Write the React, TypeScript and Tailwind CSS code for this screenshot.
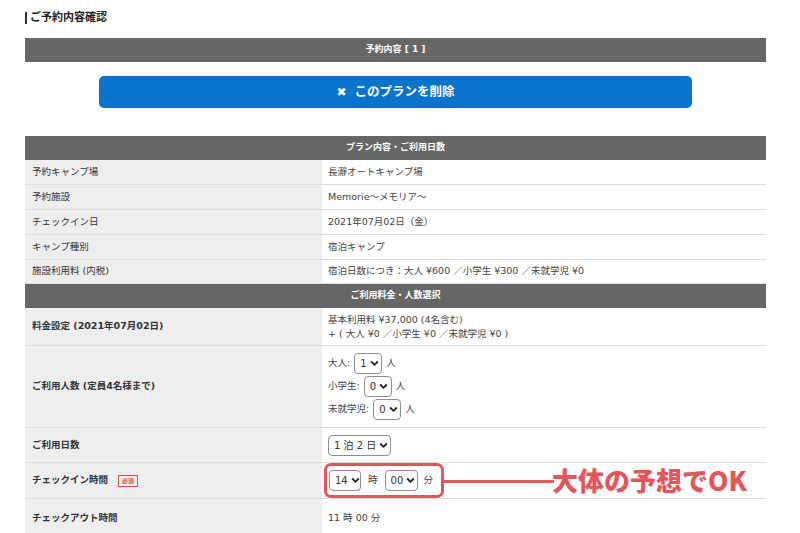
import React from "react";

const F = { fontFamily: '"DejaVu Sans", "Noto Sans CJK JP", sans-serif' };

function Sel({ v, w }: { v: string; w: string }) {
  return (
    <span
      className={`inline-flex items-center justify-between whitespace-nowrap h-[21px] ${w} pl-[5px] pr-[4px] border border-[#8f8f8f] rounded-[4px] bg-white text-[10px] text-[#333]`}
    >
      <span>{v}</span>
      <svg width="9" height="7" viewBox="0 0 9 7" className="shrink-0 ml-[3px]">
        <path d="M1.2 1.5 L4.5 4.8 L7.8 1.5" stroke="#222" strokeWidth="1.8" fill="none" />
      </svg>
    </span>
  );
}

function Header({ children }: { children: React.ReactNode }) {
  return (
    <div className="h-[24px] bg-[#666666] flex items-center justify-center text-white text-[9px] font-bold">
      {children}
    </div>
  );
}

function Row({
  label,
  children,
  h,
  bold = false,
}: {
  label: React.ReactNode;
  children: React.ReactNode;
  h: string;
  bold?: boolean;
}) {
  return (
    <div className={`flex ${h} border-b border-[#dddddd]`}>
      <div
        className={`w-[297px] bg-[#eeeeee] flex items-center pl-[7px] text-[9.5px] text-[#333] ${bold ? "font-bold" : ""}`}
      >
        {label}
      </div>
      <div className="flex-1 bg-white flex items-center pl-[6px] text-[9.5px] text-[#444]">{children}</div>
    </div>
  );
}

export default function App() {
  return (
    <div className="w-[800px] h-[533px] bg-white overflow-hidden relative" style={F}>
      <div className="pl-[25px] pr-[34px]">
        <div className="pt-[11px] h-[38px]">
          <div className="flex items-center h-[14px]">
            <span className="w-[2px] h-[12px] bg-[#333] mr-[3px]" />
            <span className="text-[11px] font-bold text-[#222]">ご予約内容確認</span>
          </div>
        </div>
        <Header>予約内容 [ 1 ]</Header>
        <div className="h-[74px] flex items-start pt-[14px] pl-[74px]">
          <div className="w-[593px] h-[32px] rounded-[5px] bg-[#0a73cb] flex items-center justify-center text-white text-[12.5px] font-bold">
            <span className="mr-[8px] text-[12px]">✖</span>
            このプランを削除
          </div>
        </div>
        <Header>プラン内容・ご利用日数</Header>
        <Row label="予約キャンプ場" h="h-[25px]">長瀞オートキャンプ場</Row>
        <Row label="予約施設" h="h-[25px]">Memorie～メモリア～</Row>
        <Row label="チェックイン日" h="h-[25px]">2021年07月02日（金）</Row>
        <Row label="キャンプ種別" h="h-[25px]">宿泊キャンプ</Row>
        <Row label="施設利用料 (内税)" h="h-[24px]">
          宿泊日数につき：大人 ¥600 ／小学生 ¥300 ／未就学児 ¥0
        </Row>
        <Header>ご利用料金・人数選択</Header>
        <Row label="料金設定 (2021年07月02日)" h="h-[38px]" bold>
          <div className="leading-[14px]">
            <div>基本利用料 ¥37,000 (4名含む)</div>
            <div>+ ( 大人 ¥0 ／小学生 ¥0 ／未就学児 ¥0 )</div>
          </div>
        </Row>
        <Row label="ご利用人数 (定員4名様まで)" h="h-[82px]" bold>
          <div className="flex flex-col gap-[2px]">
            <div className="flex items-center">
              <span className="mr-[4px]">大人:</span>
              <Sel v="1" w="w-[28px]" />
              <span className="ml-[4px]">人</span>
            </div>
            <div className="flex items-center">
              <span className="mr-[4px]">小学生:</span>
              <Sel v="0" w="w-[28px]" />
              <span className="ml-[4px]">人</span>
            </div>
            <div className="flex items-center">
              <span className="mr-[4px]">未就学児:</span>
              <Sel v="0" w="w-[28px]" />
              <span className="ml-[4px]">人</span>
            </div>
          </div>
        </Row>
        <Row label="ご利用日数" h="h-[35px]" bold>
          <Sel v="1 泊 2 日" w="w-[63px]" />
        </Row>
        <Row
          label={
            <span className="flex items-center">
              <span>チェックイン時間</span>
              <span className="ml-[10px] border border-[#d9534f] text-[#d9534f] text-[6px] px-[3px] leading-[10px]">
                必須
              </span>
            </span>
          }
          h="h-[36px]"
          bold
        >
          <div className="flex items-center pl-[1px]">
            <Sel v="14" w="w-[32px]" />
            <span className="mx-[7px]">時</span>
            <Sel v="00" w="w-[33px]" />
            <span className="ml-[6px]">分</span>
          </div>
        </Row>
        <Row label="チェックアウト時間" h="h-[40px]" bold>
          11 時 00 分
        </Row>
      </div>
      {/* annotation */}
      <div className="absolute left-[324px] top-[463px] w-[120px] h-[35px] border-[3px] border-[#e5565b] rounded-[7px]" />
      <div className="absolute left-[444px] top-[480px] w-[110px] h-[3px] bg-[#e5565b]" />
      <div
        className="absolute left-[552px] top-[462px] text-[26px] font-black text-[#e5565b] leading-[36px] tracking-[0px]"
        style={{ fontFamily: '"Noto Sans CJK JP", sans-serif' }}
      >
        大体の予想でOK
      </div>
    </div>
  );
}
